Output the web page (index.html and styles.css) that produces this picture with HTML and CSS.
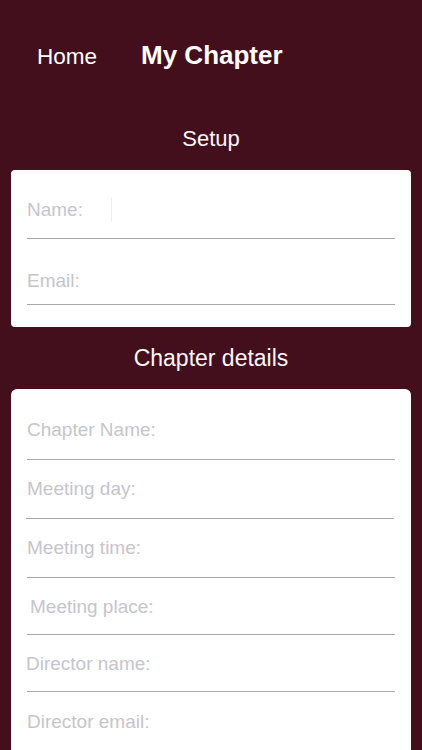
FILE: index.html
```html
<!DOCTYPE html>
<html lang="en">
<head>
<meta charset="utf-8">
<title>My Chapter</title>
<link rel="stylesheet" href="styles.css">
</head>
<body>
<div class="page">
  <header class="nav">
    <span class="nav-home">Home</span>
    <span class="nav-title">My Chapter</span>
  </header>

  <h2 class="section-title section-title--setup">Setup</h2>
  <section class="card card--setup">
    <div class="field"><span class="placeholder">Name:</span><span class="caret"></span></div>
    <div class="field"><span class="placeholder">Email:</span></div>
  </section>

  <h2 class="section-title section-title--details">Chapter details</h2>
  <section class="card card--details">
    <div class="field"><span class="placeholder">Chapter Name:</span></div>
    <div class="field"><span class="placeholder">Meeting day:</span></div>
    <div class="field"><span class="placeholder">Meeting time:</span></div>
    <div class="field"><span class="placeholder">Meeting place:</span></div>
    <div class="field"><span class="placeholder">Director name:</span></div>
    <div class="field"><span class="placeholder">Director email:</span></div>
  </section>
</div>
</body>
</html>
```

FILE: styles.css
```css
* { box-sizing: border-box; }

html, body {
  margin: 0;
  padding: 0;
  height: 100%;
  background: #430f1d;
}

body {
  font-family: "Liberation Sans", Arial, sans-serif;
  color: #ffffff;
  overflow: hidden;
}

.page {
  display: flex;
  flex-direction: column;
  height: 750px;
}

.nav {
  display: flex;
  align-items: baseline;
  gap: 44px;
  padding: 40px 0 0 37px;
  line-height: 30px;
  height: 70px;
}

.nav-home {
  font-size: 22.5px;
  font-weight: 400;
}

.nav-title {
  font-size: 26px;
  font-weight: 700;
}

.section-title {
  margin: 0;
  text-align: center;
  font-weight: 400;
  font-size: 22px;
  line-height: 26px;
  color: #fbf7f8;
}

.section-title--setup {
  margin-top: 56px;
  margin-bottom: 18px;
}

.section-title--details {
  font-size: 23px;
  margin-top: 18px;
  margin-bottom: 18px;
}

.card {
  background: #ffffff;
  margin: 0 11px;
  padding: 0 16px;
}

.card--setup {
  border-radius: 4px;
  padding-bottom: 22px;
}

.card--details {
  flex: 1;
  border-radius: 6px 6px 0 0;
  margin-bottom: 1px;
}

.field {
  display: flex;
  align-items: center;
  height: 22px;
  box-sizing: content-box;
  border-bottom: 1px solid #a8a8a8;
  line-height: 22px;
}

.placeholder {
  font-size: 19px;
  color: #c5c5cb;
  white-space: nowrap;
}

.caret {
  display: inline-block;
  width: 1px;
  height: 24px;
  margin-left: 28px;
  background: #f0f0f2;
}

/* Setup card rows */
.card--setup .field:nth-child(1) { padding: 29px 0 17px; }
.card--setup .field:nth-child(2) { padding: 31px 0 12px; }

/* Chapter details rows */
.card--details .field { padding: 18px 0 18px; }
.card--details .field:nth-child(1) { padding-top: 30px; padding-bottom: 18px; }
.card--details .field:nth-child(2) { margin-left: -1px; margin-right: 1px; padding-bottom: 18px; }
.card--details .field:nth-child(2) .placeholder { margin-left: 1px; }
.card--details .field:nth-child(3) { padding-top: 17.5px; padding-bottom: 18px; }
.card--details .field:nth-child(4) { padding-bottom: 16px; }
.card--details .field:nth-child(4) .placeholder { padding-left: 3px; }
.card--details .field:nth-child(5) { padding-top: 18.5px; padding-bottom: 15.5px; }
.card--details .field:nth-child(5) .placeholder { margin-left: -1px; }
.card--details .field:nth-child(6) { padding-top: 19px; border-bottom: none; }
```
